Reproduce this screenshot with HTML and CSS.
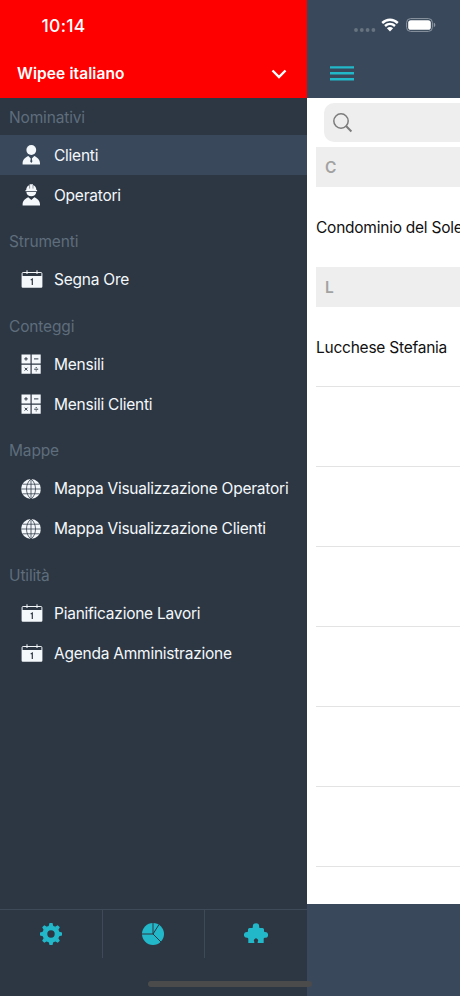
FILE: index.html
```html
<!DOCTYPE html>
<html lang="it">
<head>
<meta charset="utf-8">
<title>Wipee</title>
<link rel="stylesheet" href="styles.css">
</head>
<body>
<svg class="defs" aria-hidden="true">
  <symbol id="calendar" viewBox="0 0 22 18">
    <path fill="currentColor" d="M.6 6h20.800v10.600a1.200 1.200 0 0 1-1.200 1.200H1.800a1.200 1.200 0 0 1-1.200-1.200z"/>
    <path d="M1.100 6V3.500q0-1 1-1h17.800q1 0 1 1V6M6 .3v3.700M16 .3v3.700" fill="none" stroke="currentColor" stroke-width="1"/>
    <path d="M9.700 9.900l1.600-.9v5.900" fill="none" stroke="#2c3743" stroke-width="1.200"/>
  </symbol>
  <symbol id="calc" viewBox="0 0 20 20">
    <path fill="currentColor" d="M.5.500h9v9h-9zM10.700.500h9v9h-9zM.5 10.700h9v9h-9zM10.700 10.700h9v9h-9z"/>
    <path d="M3.200 4.900h3.600M5 3.100v3.600M13 4.900h4.400M3.600 13.700l2.900 2.900M6.500 13.700l-2.900 2.900M13.200 15.200h4M15.200 13v1M15.200 16.400v1" fill="none" stroke="#2c3743" stroke-width="1"/>
  </symbol>
  <symbol id="globe" viewBox="0 0 20 20">
    <circle cx="10" cy="10" r="9.900" fill="currentColor"/>
    <path d="M10 0v20M0 10h20M1.500 5.200h17M1.500 14.800h17M10 0C4 4.500 4 15.500 10 20M10 0c6 4.500 6 15.500 0 20" fill="none" stroke="#2c3743" stroke-width=".75"/>
  </symbol>
</svg>
<div class="app">
  <aside class="drawer">
    <header class="account">
      <div class="clock">10:14</div>
      <div class="account-row">
        <span class="account-name">Wipee italiano</span>
        <svg class="chevron" viewBox="0 0 16 10"><path d="M1.500 1.500L8 8l6.500-6.500" fill="none" stroke="#fff" stroke-width="2.400"/></svg>
      </div>
    </header>
    <nav class="menu">
      <h2 class="heading first">Nominativi</h2>
      <a class="item active"><svg class="icon" viewBox="0 0 20 20"><circle cx="10.300" cy="5" r="4.900" fill="currentColor"/><path fill="currentColor" d="M1.600 19.600v-1.200c0-3.900 2.700-5.800 5.700-7.300l3 2.900 3-2.900c3 1.500 5.700 3.400 5.700 7.300v1.200z"/><path fill="#39495b" d="M9.500 11.600h1.600l-.3 2 .6 2.800-1.100 1.500-1.100-1.500.6-2.800z"/></svg><span>Clienti</span></a>
      <a class="item"><svg class="icon tall" viewBox="0 0 20 22"><path fill="currentColor" d="M5.200 6C5.300 3.200 6.600 1.600 8.600.9V.2h3.400v.7c2 .7 3.300 2.300 3.400 5.100h.7v1.200H4.500V6zM5.400 8h9.800c-.2 5.800-9.600 5.800-9.800 0zM1.600 21.600v-1.200c0-3.700 2.500-5.700 5.700-7.200l3 2.700 3-2.700c3.200 1.500 5.700 3.500 5.700 7.200v1.200z"/><path d="M8.600 1v3.600M12 1v3.600" stroke="#2c3743" stroke-width=".5"/></svg><span>Operatori</span></a>
      <h2 class="heading">Strumenti</h2>
      <a class="item"><svg class="icon wide"><use href="#calendar"/></svg><span>Segna Ore</span></a>
      <h2 class="heading">Conteggi</h2>
      <a class="item"><svg class="icon"><use href="#calc"/></svg><span>Mensili</span></a>
      <a class="item"><svg class="icon"><use href="#calc"/></svg><span>Mensili Clienti</span></a>
      <h2 class="heading">Mappe</h2>
      <a class="item"><svg class="icon"><use href="#globe"/></svg><span>Mappa Visualizzazione Operatori</span></a>
      <a class="item"><svg class="icon"><use href="#globe"/></svg><span>Mappa Visualizzazione Clienti</span></a>
      <h2 class="heading">Utilità</h2>
      <a class="item"><svg class="icon wide"><use href="#calendar"/></svg><span>Pianificazione Lavori</span></a>
      <a class="item"><svg class="icon wide"><use href="#calendar"/></svg><span>Agenda Amministrazione</span></a>
    </nav>
    <footer class="tabs">
      <div class="tab"><svg class="tab-icon" viewBox="-12 -12 24 24"><g fill="#22b8c9"><path fill-rule="evenodd" d="M0-8.600A8.600 8.600 0 1 1 0 8.600 8.600 8.600 0 1 1 0-8.600zM0-3.700A3.700 3.700 0 1 0 0 3.700 3.700 3.700 0 1 0 0-3.700z"/><path id="tooth" d="M-2.300-8L-1.500-11h3l.8 3z"/><use href="#tooth" transform="rotate(45)"/><use href="#tooth" transform="rotate(90)"/><use href="#tooth" transform="rotate(135)"/><use href="#tooth" transform="rotate(180)"/><use href="#tooth" transform="rotate(225)"/><use href="#tooth" transform="rotate(270)"/><use href="#tooth" transform="rotate(315)"/></g></svg></div>
      <div class="tab"><svg class="tab-icon" viewBox="-12 -12 24 24"><circle r="11" fill="#22b8c9"/><path d="M-11 0H0V-11M0 0l6-9.500M0 0l8 8" fill="none" stroke="#2c3743" stroke-width="1"/></svg></div>
      <div class="tab"><svg class="tab-icon" viewBox="-12 -12 24 24"><path fill="#22b8c9" d="M-8-4.500Q-8-6-6.500-6H-4.500C-3-6-3.200-6.800-3.200-7.500a3.200 3.200 0 0 1 6.400 0C3.200-6.800 3-6 4.500-6H6.500Q8-6 8-4.500V-3.200C8-2 8.500-2 9.200-2a2.900 2.900 0 0 1 0 5.800C8.500 3.800 7.700 4 7.700 5V9H2C1.500 9 1.500 8.400 1.800 7.600a2.100 2.100 0 1 0-3.600 0C-1.500 8.400-1.500 9-2 9H-7.700V5C-7.700 4-8.500 3.800-9.200 3.800a2.900 2.900 0 0 1 0-5.800C-8.500-2-8-2-8-3.200z"/></svg></div>
    </footer>
  </aside>
  <main class="page">
    <header class="topbar">
      <div class="status">
        <svg class="signal" viewBox="0 0 22 4" fill="#67737f"><circle cx="2" cy="2" r="1.900"/><circle cx="7.800" cy="2" r="1.900"/><circle cx="13.600" cy="2" r="1.900"/><circle cx="19.400" cy="2" r="1.900"/></svg>
        <svg class="wifi" viewBox="0 0 18 14"><path d="M1.200 5c4.600-4.300 11-4.300 15.600 0M4 8c3-2.700 7-2.700 10 0" fill="none" stroke="#fff" stroke-width="2.400"/><path fill="#fff" d="M5.900 10.200c1.900-1.600 4.300-1.600 6.200 0L9 13.500z"/></svg>
        <svg class="battery" viewBox="0 0 30 14"><rect x=".6" y=".6" width="25.800" height="12.800" rx="4" fill="none" stroke="#8d97a3"/><rect x="2.200" y="2.200" width="22.600" height="9.600" rx="2.600" fill="#fff"/><path d="M27.800 4.800c2 .6 2 3.800 0 4.400z" fill="#8d97a3"/></svg>
      </div>
      <svg class="burger" viewBox="0 0 24 15"><path d="M0 1.400h24M0 7.300h24M0 13.200h24" stroke="#22b8c9" stroke-width="2.400"/></svg>
    </header>
    <section class="list">
      <div class="search"><svg class="lens" viewBox="0 0 20 20"><circle cx="8" cy="8" r="7.200" fill="none" stroke="#7c7c7c" stroke-width="1.500"/><path d="M12.800 12.800l5.600 5.700" stroke="#7c7c7c" stroke-width="2"/></svg></div>
      <div class="letter">C</div>
      <div class="row"><span>Condominio del Sole</span></div>
      <div class="letter">L</div>
      <div class="row lined"><span>Lucchese Stefania</span></div>
      <div class="row lined"></div>
      <div class="row lined"></div>
      <div class="row lined"></div>
      <div class="row lined"></div>
      <div class="row lined"></div>
      <div class="row lined"></div>
    </section>
  </main>
  <div class="home"></div>
</div>
</body>
</html>
```
FILE: styles.css
```css
* { box-sizing: border-box; }
body { margin: 0; font-family: Inter, "Liberation Sans", sans-serif; font-size: 15.5px; }
.defs { position: absolute; width: 0; height: 0; }
.app { position: relative; display: flex; width: 460px; height: 996px; overflow: hidden; background: #39495b; }
.drawer { display: flex; flex-direction: column; flex: none; width: 306.5px; background: #2c3743; color: #f4f8fb; }
.account { height: 98px; background: #f00; color: #fff; padding-top: 15px; flex: none; }
.clock { height: 22px; line-height: 22px; padding-left: 41.5px; font-size: 17.5px; font-weight: 550; letter-spacing: .3px; }
.account-row { display: flex; align-items: center; justify-content: space-between; height: 24px; margin-top: 24.5px; padding: 0 20px 0 17px; }
.account-name { font-weight: 600; letter-spacing: .1px; }
.chevron { width: 16px; height: 10px; }
.menu { flex: 1; }
.heading { height: 44.5px; margin: 0; padding: 8px 0 0 9px; line-height: 38px; font-size: 15.5px; font-weight: 400; letter-spacing: -.15px; color: #5f6d7c; }
.first { height: 37px; padding-top: 1px; }
.item { display: flex; align-items: center; height: 40px; padding-left: 21px; gap: 12.5px; white-space: nowrap; letter-spacing: -.24px; }
.icon { width: 20px; height: 20px; flex: none; margin-right: .5px; overflow: visible; }
.active { background: #39495b; }
.tall { height: 22px; }
.wide { width: 22px; height: 18px; margin: -1px -1px 0 -.5px; }
.tabs { display: flex; height: 87px; border-top: 1px solid #3e4a57; }
.tab { flex: 1; display: flex; justify-content: center; align-items: center; height: 48px; }
.tab + .tab { border-left: 1px solid #3e4a57; }
.tab-icon { width: 24px; height: 24px; }
.page { flex: 1; min-width: 0; }
.topbar { height: 98px; }
.status { display: flex; align-items: center; height: 50px; padding-left: 47.5px; }
.signal { width: 22px; height: 4px; margin-top: 9px; }
.wifi { width: 18px; height: 14px; margin-left: 5px; }
.battery { width: 30px; height: 14px; margin-left: 7px; }
.burger { display: block; width: 24px; height: 15px; margin: 16px 0 0 23.5px; }
.list { height: 806px; margin-top: 0; padding: 5px 0 0 9.5px; background: #fff; color: #111; overflow: hidden; }
.search { height: 39px; margin: 0 0 5px 8px; padding: 9.5px 8.5px; border-radius: 10px 0 0 10px; background: #eee; }
.lens { display: block; width: 20px; height: 20px; }
.letter { height: 40px; line-height: 41px; padding-left: 9px; background: #eee; color: #a2a2a2; font-weight: 600; }
.row { height: 80px; line-height: 82px; white-space: nowrap; letter-spacing: -.24px; }
.lined { border-bottom: 1px solid #e3e3e3; }
.home { position: absolute; left: 148px; top: 981px; width: 164px; height: 6px; border-radius: 3px; background: #4b4b4c; }
```
